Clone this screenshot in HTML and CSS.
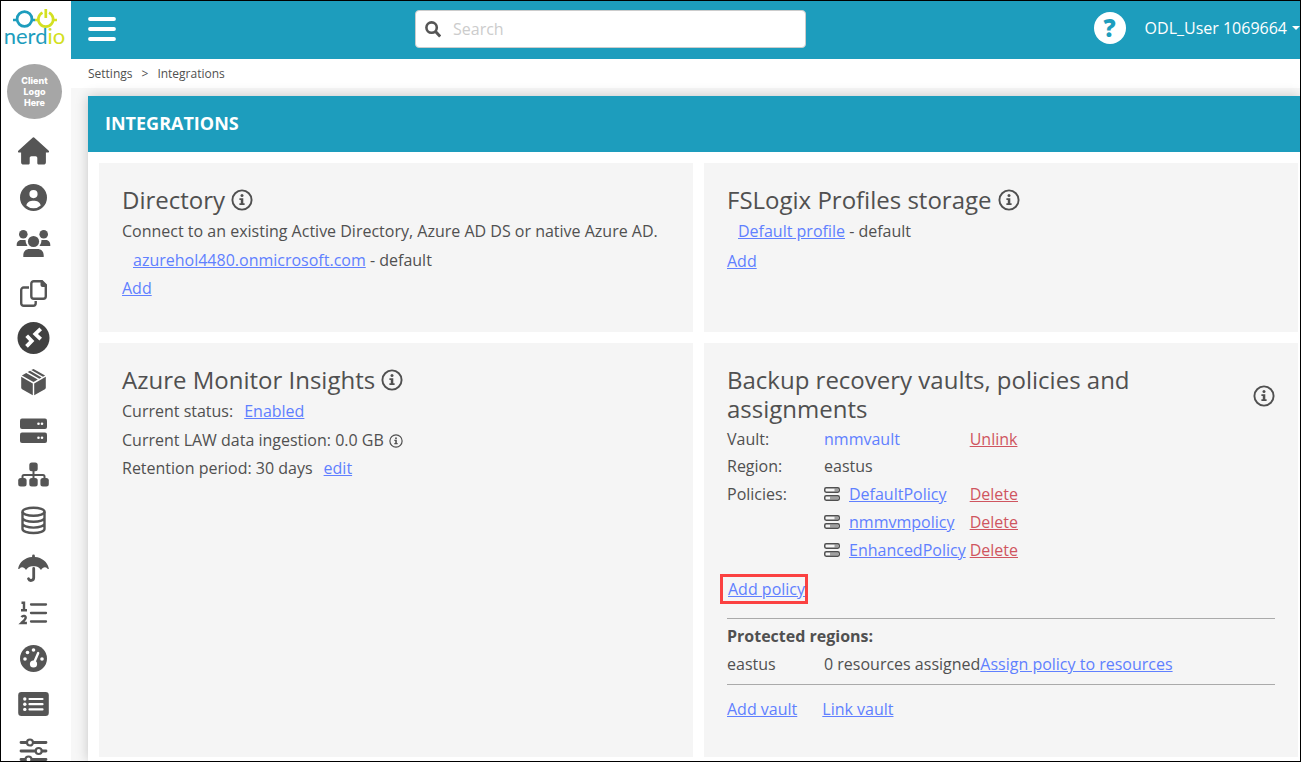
FILE: index.html
```html
<!DOCTYPE html>
<html lang="en">
<head>
<meta charset="utf-8">
<title>Integrations</title>
<link rel="stylesheet" href="styles.css">
</head>
<body>
<svg class="defs" aria-hidden="true">
  <symbol id="info" viewBox="0 0 22 22">
    <circle cx="11" cy="11" r="9.6" fill="none" stroke="currentColor" stroke-width="1.9"/>
    <circle cx="11" cy="6.6" r="1.5" fill="currentColor"/>
    <path d="M8.4 9.2h3.9v5h1.3v1.8H8.4v-1.8h1.4V11H8.4z" fill="currentColor"/>
  </symbol>
  <symbol id="policy" viewBox="0 0 16 14">
    <g fill="none" stroke="currentColor" stroke-width="1.500">
      <rect x=".75" y=".75" width="14.5" height="4.5" rx="1.4"/>
      <rect x=".75" y="8.75" width="14.5" height="4.5" rx="1.4"/>
    </g>
    <path d="M10.500 3h3.500M6 11h8" stroke="currentColor" stroke-width="3" opacity=".5"/>
  </symbol>
</svg>
<div class="app">
  <aside class="sidebar">
    <a class="brand" href="#" aria-label="nerdio">
      <svg width="44" height="20" viewBox="0 0 44 20" fill="none" stroke-width="2.700">
        <g stroke="#1d9dbd"><circle cx="11.500" cy="10" r="7.400"/><path d="M0 11h4M19 11h3" /></g>
        <g stroke="#d3e021"><path d="M29.500 3.600a7.400 7.400 0 1 0 6.500 0M32.800 0v9M22 11h4M40 11h4"/></g>
      </svg>
      <span class="brand-name">nerd<span class="brand-accent">io</span></span>
    </a>
    <div class="client">Client<br>Logo<br>Here</div>
    <nav class="nav">
      <a href="#" aria-label="Home"><svg viewBox="-22.5 -23 45 46"><path d="M-1.200-13.100a1.800 1.800 0 0 1 2.400 0L15 -.6c1.200 1.200.4 2.200-.8 2.200h-1.800v9.600c0 1.500-.9 2.400-2.400 2.400H5.500c-1 0-1.700-.7-1.700-1.700V7c0-1-.7-1.700-1.700-1.700h-4.200c-1 0-1.700.7-1.700 1.700v4.900c0 1-.7 1.700-1.700 1.700H-10c-1.500 0-2.400-.9-2.400-2.400V1.600h-1.800c-1.200 0-2-1-.8-2.200z"/></svg></a>
      <a href="#" aria-label="Account"><svg viewBox="-22.5 -23 45 46"><circle cy=".5" r="13.500"/><circle cy="-2.900" r="4.100" fill="#fff"/><path d="M-7.200 8.400C-6.400 5-3.500 3.700 0 3.700S6.400 5 7.200 8.400A10.600 10.600 0 0 1-7.200 8.400z" fill="#fff"/></svg></a>
      <a href="#" aria-label="Users"><svg viewBox="-22.5 -23 45 46"><circle cx="-10.200" cy="-8.800" r="4.300"/><circle cx="10.200" cy="-8.800" r="4.300"/><circle cy="-1.500" r="5.600"/><path d="M-16.800 3v-1c0-3.500 2.200-5 4.500-5h4.400A8 8 0 0 0-6 3zM16.800 3v-1c0-3.500-2.200-5-4.500-5H7.900A8 8 0 0 1 6 3zM-10.200 14v-1.500C-10.200 8-7.200 6-4.200 6h8.400c3 0 6 2 6 6.500V14z"/></svg></a>
      <a href="#" aria-label="Clone"><svg viewBox="-22.5 -23 45 46"><g fill="none" stroke="#555" stroke-width="2.400"><path d="M-4.500-1.500h-5.300a2.500 2.500 0 0 0-2.500 2.500v13.300a2.500 2.500 0 0 0 2.500 2.500h9.500a2.500 2.500 0 0 0 2.500-2.500V12"/><path d="M.3-7.800H8.500l3.800 3.800V7.300a2.500 2.500 0 0 1-2.500 2.500H.3a2.500 2.500 0 0 1-2.500-2.500v-12.600a2.500 2.500 0 0 1 2.500-2.500z"/></g><path d="M7-8.500h1.500l4.800 4.800V-2H9a2 2 0 0 1-2-2z"/></svg></a>
      <a href="#" aria-label="Desktops"><svg viewBox="-22.5 -23 45 46"><circle cy="3" r="16" fill="#414141"/><path d="M-6.800.8-1.800 6-7 11.300M7.200-6.200 1.800-1 7.200 4.200" fill="none" stroke="#fff" stroke-width="3.800"/></svg></a>
      <a href="#" aria-label="Images"><svg viewBox="-22.5 -23 45 46"><path d="M-12.300-4.200-.7 2.400v11.800l-10.700-6c-.6-.4-.9-.8-.9-1.500zM12.300-4.200.7 2.400v11.800l10.700-6c.6-.4.9-.8.9-1.500zM-11.600-5.500l4.300-2.500L4.300-1.400 0 1.100zM-5.800-8.900l2.300-1.300L8.100-3.500 5.800-2.200zM-2.200-10.900 0-11.900 11.600-5.500 9.500-4.300z"/></svg></a>
      <a href="#" aria-label="Hosts"><svg viewBox="-22.5 -23 45 46"><rect x="-13.500" y="-8.500" width="27" height="10.500" rx="2"/><rect x="-13.500" y="5.500" width="27" height="10.500" rx="2"/><g fill="#fff"><circle cx="5" cy="-3.300" r="1.300"/><circle cx="8.500" cy="-3.300" r="1.300"/><circle cx="5" cy="10.700" r="1.300"/><circle cx="8.500" cy="10.700" r="1.300"/></g></svg></a>
      <a href="#" aria-label="Network"><svg viewBox="-22.5 -23 45 46"><path d="M0-2V7M-11 6V3.500Q-11 2-9.500 2H9.500Q11 2 11 3.500V6" fill="none" stroke="#555" stroke-width="2"/><rect x="-4.200" y="-10.500" width="8.400" height="8.700" rx="2.500"/><rect x="-15.300" y="5" width="8.400" height="8.500" rx="2.500"/><rect x="-4.200" y="5" width="8.400" height="8.500" rx="2.500"/><rect x="6.900" y="5" width="8.400" height="8.500" rx="2.500"/></svg></a>
      <a href="#" aria-label="Databases"><svg viewBox="-22.5 -23 45 46"><g fill="none" stroke="#555" stroke-width="2.400"><ellipse cy="-7.300" rx="11" ry="4"/><path d="M-11-7.300V10c0 2.200 4.900 4 11 4s11-1.800 11-4V-7.300M-11-1.200c0 2.200 4.900 4 11 4s11-1.800 11-4M-11 4.600c0 2.200 4.900 4 11 4s11-1.800 11-4"/></g></svg></a>
      <a href="#" aria-label="Protection"><svg viewBox="-22.5 -23 45 46"><path d="M-1.400-8v-1a1.400 1.400 0 0 1 2.800 0v1C8.500-7.500 14-3 15.300 3.200c.2.900-.6 1.100-1.200.5C12 1.600 9.500 1.800 7.500 5 5.500 1.500 2 1.200 0 1.200S-5.500 1.500-7.500 5c-2-3.200-4.500-3.400-6.600-1.300-.6.600-1.400.4-1.200-.5C-14-3-8.500-7.500-1.400-8z"/><path d="M.2 3.500v9.300a2.700 2.700 0 0 1-5.200 1" fill="none" stroke="#555" stroke-width="2.800" stroke-linecap="round"/></svg></a>
      <a href="#" aria-label="Sequences"><svg viewBox="-22.5 -23 45 46"><path d="M-2.500-6.500h15M-2.500 2h15M-2.500 10.500h15" stroke="#555" stroke-width="2.300" stroke-linecap="round"/><path d="M-12-8.300h2.500v8M-12.500-.7h6M-12 6.100c1.200-1.800 4.500-1.500 4.200.7-.2 1.500-2.500 3.500-4.300 5.200h5.500" fill="none" stroke="#555" stroke-width="2.400"/></svg></a>
      <a href="#" aria-label="Dashboard"><svg viewBox="-22.5 -23 45 46"><circle cy="1.500" r="13.500"/><g fill="#fff"><circle cx="-8.500" cy="2" r="1.800"/><circle cx="-6" cy="-4.500" r="1.800"/><circle cy="-7" r="1.800"/><circle cx="8.500" cy="2" r="1.800"/><circle cy="7" r="3.600"/></g><path d="M0 7 4.700-4" stroke="#fff" stroke-width="2.400" stroke-linecap="round"/></svg></a>
      <a href="#" aria-label="Logs"><svg viewBox="-22.5 -23 45 46"><rect x="-15.300" y="-11" width="30.600" height="24" rx="3.200"/><g fill="#fff"><circle cx="-8.700" cy="-4" r="1.700"/><circle cx="-8.700" cy="1.200" r="1.700"/><circle cx="-8.700" cy="6.400" r="1.700"/></g><path d="M-4-4H9M-4 1.200H9M-4 6.400H9" stroke="#fff" stroke-width="2.200" stroke-linecap="round"/></svg></a>
      <a href="#" aria-label="Settings"><svg viewBox="-22.5 -23 45 46"><path d="M-12.500-6.500h25M-12.500 2h25M-12.500 10.500h25" stroke="#555" stroke-width="2.800" stroke-linecap="round"/><g fill="#fff" stroke="#555" stroke-width="2.200"><circle cx="-3.500" cy="-6.500" r="3"/><circle cx="5.200" cy="2" r="3"/><circle cx="-5" cy="10.500" r="3"/></g></svg></a>
    </nav>
  </aside>
  <div class="main">
    <header class="topbar">
      <button class="menu" type="button" aria-label="Menu"><svg width="28" height="24" viewBox="0 0 28 24"><path d="M2 2h24M2 12h24M2 22h24" stroke="#fff" stroke-width="3.800" stroke-linecap="round"/></svg></button>
      <label class="search">
        <svg width="16" height="17" viewBox="0 0 16 17" fill="none" stroke="#555"><circle cx="6.600" cy="6.600" r="5.200" stroke-width="2.600"/><path d="m10.500 10.500 4.700 5" stroke-width="3"/></svg>
        <input type="text" placeholder="Search" aria-label="Search">
      </label>
      <div class="account">
        <button class="help" type="button" aria-label="Help">?</button>
        <button class="user" type="button">ODL_User 1069664<span class="caret"></span></button>
      </div>
    </header>
    <div class="crumbs"><a href="#">Settings</a><span>&gt;</span><a href="#">Integrations</a></div>
    <main class="content">
      <section class="panel">
        <h1>INTEGRATIONS</h1>
        <div class="cards">
          <article class="card">
            <h2>Directory<svg class="info"><use href="#info"/></svg></h2>
            <p>Connect to an existing Active Directory, Azure AD DS or native Azure AD.</p>
            <p class="indent"><a href="#">azurehol4480.onmicrosoft.com</a> - default</p>
            <p><a href="#">Add</a></p>
          </article>
          <article class="card">
            <h2>FSLogix Profiles storage<svg class="info"><use href="#info"/></svg></h2>
            <p class="indent spaced"><a href="#">Default profile</a> - default</p>
            <p><a href="#">Add</a></p>
          </article>
          <article class="card">
            <h2>Azure Monitor Insights<svg class="info"><use href="#info"/></svg></h2>
            <p>Current status:<a class="after" href="#">Enabled</a></p>
            <p>Current LAW data ingestion: 0.0 GB<svg class="info info-small"><use href="#info"/></svg></p>
            <p>Retention period: 30 days<a class="after" href="#">edit</a></p>
          </article>
          <article class="card">
            <div class="title-row">
              <h2>Backup recovery vaults, policies and assignments</h2>
              <svg class="info"><use href="#info"/></svg>
            </div>
            <table class="vault">
              <tr><th scope="row">Vault:</th><td><a class="plain" href="#">nmmvault</a></td><td><a class="danger" href="#">Unlink</a></td></tr>
              <tr><th scope="row">Region:</th><td>eastus</td><td></td></tr>
              <tr class="policy"><th scope="row">Policies:</th><td><svg><use href="#policy"/></svg><a href="#">DefaultPolicy</a></td><td><a class="danger" href="#">Delete</a></td></tr>
              <tr class="policy"><th></th><td><svg><use href="#policy"/></svg><a href="#">nmmvmpolicy</a></td><td><a class="danger" href="#">Delete</a></td></tr>
              <tr class="policy"><th></th><td><svg><use href="#policy"/></svg><a href="#">EnhancedPolicy</a></td><td><a class="danger" href="#">Delete</a></td></tr>
            </table>
            <div class="add-policy"><a href="#">Add policy</a></div>
            <div class="regions">
              <strong>Protected regions:</strong>
              <div class="region"><span class="region-name">eastus</span><span>0 resources assigned</span><a href="#">Assign policy to resources</a></div>
            </div>
            <div class="links"><a href="#">Add vault</a><a href="#">Link vault</a></div>
          </article>
        </div>
      </section>
    </main>
  </div>
</div>
</body>
</html>
```
FILE: styles.css
```css
* { box-sizing: border-box; }
body {
  margin: 0;
  font-family: "Open Sans", sans-serif;
  font-size: 16px;
  line-height: 28px;
  color: #505050;
  background: #fff;
}
h1, h2, p { margin: 0; }
a { color: #6080ff; }
button { border: 0; padding: 0; background: none; font: inherit; color: inherit; }
svg { flex: none; }
.defs { position: absolute; width: 0; height: 0; }

.app {
  display: grid;
  grid-template-columns: 70px minmax(0, 1fr);
  height: 100vh;
  border: 1px solid #000;
  overflow: hidden;
}

.sidebar {
  display: flex;
  flex-direction: column;
  align-items: center;
  min-height: 0;
  padding: 8px 3px 0 0;
  overflow: hidden;
}
.sidebar > * { flex: none; }
.brand {
  display: flex;
  flex-direction: column;
  align-items: center;
  color: #1d9dbd;
  text-decoration: none;
}
.brand-name { font: 400 22px/14px Lato, sans-serif; }
.brand-accent { color: #d3e021; }
.client {
  display: flex;
  align-items: center;
  justify-content: center;
  width: 55px;
  height: 55px;
  margin-top: 21px;
  border-radius: 50%;
  background: #a6a6a6;
  color: #fff;
  font: 800 9px/11px Inter, sans-serif;
  text-align: center;
}
.nav { margin: 9px 2px 0 0; }
.nav a { display: block; height: 46px; }
.nav svg { display: block; width: 45px; height: 46px; fill: #555; }

.main { display: flex; flex-direction: column; min-width: 0; min-height: 0; }
.topbar {
  display: flex;
  align-items: center;
  flex: none;
  height: 58px;
  padding: 0 0 2px 17px;
  background: #1d9dbd;
  color: #fff;
}
.menu svg { display: block; }
.search {
  display: flex;
  align-items: center;
  gap: 12px;
  width: 391px;
  height: 38px;
  margin: 0 20px 0 299px;
  padding: 0 9px;
  border: 1px solid #ccc;
  border-radius: 4px;
  background: #fff;
}
.search input {
  flex: 1;
  min-width: 0;
  padding: 0;
  border: 0;
  outline: 0;
  background: none;
  font: inherit;
  color: #555;
}
.search input::placeholder { color: #ccc; opacity: 1; }
.account { display: flex; align-items: center; gap: 19px; margin-left: auto; padding-bottom: 2px; }
.help {
  width: 32px;
  height: 32px;
  border-radius: 50%;
  background: #fff;
  color: #1d9dbd;
  font: 800 24px/32px "Open Sans", sans-serif;
}
.user { display: flex; align-items: center; gap: 5px; white-space: nowrap; }
.caret { border: 4px solid transparent; border-top-color: #fff; border-bottom: 0; }

.crumbs {
  display: flex;
  gap: 9px;
  flex: none;
  padding-left: 17px;
  font-size: 12px;
  line-height: 29px;
}
.crumbs a { color: inherit; text-decoration: none; }

.content { display: flex; flex: 1; min-height: 0; padding: 8px 0 0 17px; background: #f7f7f7; }
.panel {
  display: flex;
  flex: 1;
  flex-direction: column;
  min-width: 0;
  background: #fff;
  box-shadow: 0 0 12px rgba(0, 0, 0, .2);
}
h1 {
  padding: 0 17px 2px;
  background: #1d9dbd;
  color: #fff;
  font-size: 18px;
  font-weight: 700;
  line-height: 54px;
}
.cards {
  display: grid;
  flex: 1;
  grid-template-columns: repeat(2, minmax(0, 1fr));
  grid-template-rows: auto 1fr;
  gap: 11px;
  padding: 11px 2px 4px 11px;
}
.card { padding: 22px 23px 30px; background: #f5f5f5; }
h2 {
  display: flex;
  align-items: center;
  gap: 6px;
  margin-bottom: 3px;
  font-size: 24px;
  font-weight: 400;
  line-height: 29px;
}
h2 + p { margin-bottom: 1px; }
.info { width: 22px; height: 22px; }
.info-small { width: 14px; height: 14px; margin-left: 5px; vertical-align: -2px; }
.indent { padding-left: 11px; }
.spaced { margin-bottom: 2px; }
.after { margin-left: 11px; }

.title-row { display: flex; align-items: center; justify-content: space-between; }
.title-row h2 { max-width: 440px; }
.vault { border-collapse: collapse; line-height: 27px; }
.vault th { width: 97px; padding: 0; font-weight: 400; text-align: left; }
.vault td { min-width: 145px; padding: 0 4px 0 0; }
.vault .policy { line-height: 28px; }
.vault svg { width: 16px; height: 14px; margin-right: 9px; vertical-align: -1px; }
.plain { text-decoration: none; }
.danger { color: #cf5560; }
.add-policy {
  width: max-content;
  margin: 10px 0 14px -7px;
  padding: 0 0 0 5px;
  border: 3px solid #fb4141;
  line-height: 24px;
}
.regions { padding: 3px 0 6px; border: solid #aaa; border-width: 1px 0; }
.region { display: flex; }
.region-name { width: 97px; }
.links { display: flex; gap: 25px; padding-top: 10px; }
```
